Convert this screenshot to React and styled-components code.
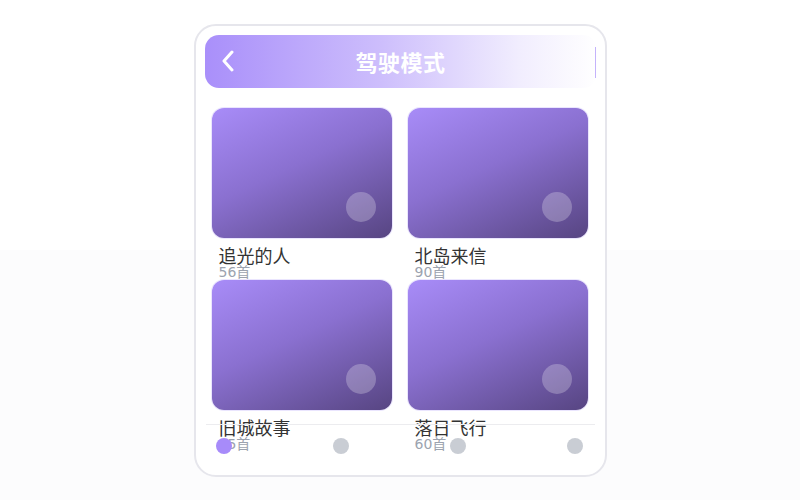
import React from 'react';
import styled, { createGlobalStyle } from 'styled-components';

const GlobalStyle = createGlobalStyle`
  html, body {
    margin: 0;
    padding: 0;
  }
  body {
    background: linear-gradient(180deg, #ffffff 50%, #fcfcfd 50%);
    font-family: "DejaVu Sans", "Noto Sans CJK SC", sans-serif;
  }
`;

const Page = styled.div`
  height: 100vh;
  display: flex;
  align-items: center;
  justify-content: center;
`;

const Phone = styled.div`
  position: relative;
  width: 413px;
  height: 453px;
  box-sizing: border-box;
  border: 2px solid #e6e6ec;
  border-radius: 22px;
  background: #fff;
  overflow: hidden;
  display: flex;
  flex-direction: column;
`;

const Header = styled.div`
  position: relative;
  height: 53px;
  margin: 9px 8px 0 9px;
  border-radius: 14px;
  background: linear-gradient(90deg, #a98ffa 0%, #cdbefc 45%, #f1edfe 80%, #ffffff 100%);
  display: flex;
  align-items: center;
  justify-content: center;
  flex-shrink: 0;
`;

const BackButton = styled.button`
  position: absolute;
  left: 16px;
  top: 50%;
  transform: translateY(-50%);
  border: none;
  background: none;
  padding: 0;
  display: flex;
  cursor: pointer;
`;

const Title = styled.h1`
  margin: 0;
  font-family: "Noto Sans CJK SC", sans-serif;
  font-size: 22px;
  font-weight: 700;
  color: #fff;
  letter-spacing: 0.5px;
`;

const EdgeLine = styled.span`
  position: absolute;
  right: 1px;
  top: 12px;
  bottom: 10px;
  width: 1px;
  background: #c4b3fb;
`;

const Grid = styled.div`
  display: grid;
  grid-template-columns: 1fr 1fr;
  grid-auto-rows: 172px;
  column-gap: 16px;
  padding: 20px 17px 0 16px;
`;

const Card = styled.div`
  display: flex;
  flex-direction: column;
  min-width: 0;
`;

const Cover = styled.div`
  position: relative;
  height: 130px;
  border-radius: 12px;
  background: linear-gradient(155deg, #a88cf8 0%, #8a70d0 45%, #574582 100%);
  box-shadow: 0 0 0 1px rgba(196, 181, 253, 0.35);
`;

const PlayDot = styled.span`
  position: absolute;
  right: 16px;
  bottom: 16px;
  width: 30px;
  height: 30px;
  border-radius: 50%;
  background: rgba(255, 255, 255, 0.25);
`;

const Name = styled.div`
  margin-top: 10px;
  padding-left: 7px;
  font-size: 18px;
  line-height: 17px;
  color: #333;
`;

const Count = styled.div`
  padding-left: 7px;
  font-size: 14px;
  line-height: 14px;
  color: #9ca3af;
`;

const TabBar = styled.nav`
  position: absolute;
  left: 10px;
  right: 10px;
  bottom: 7px;
  height: 44px;
  box-sizing: border-box;
  border-top: 1px solid #ececef;
  padding: 0 11px 0 10px;
  display: flex;
  align-items: center;
  justify-content: space-between;
`;

const TabDot = styled.span`
  width: 16px;
  height: 16px;
  border-radius: 50%;
  background: ${(props) => (props.active ? '#a78bfa' : '#c9cdd4')};
`;

const albums = [
  { name: '追光的人', count: 56 },
  { name: '北岛来信', count: 90 },
  { name: '旧城故事', count: 35 },
  { name: '落日飞行', count: 60 },
];

function App() {
  return (
    <Page>
      <GlobalStyle />
      <Phone>
        <Header>
          <BackButton aria-label="返回">
            <svg width="14" height="22" viewBox="0 0 14 22" fill="none">
              <path d="M11 2 L3 11 L11 20" stroke="#fff" strokeWidth="3" strokeLinecap="round" strokeLinejoin="round" />
            </svg>
          </BackButton>
          <Title>驾驶模式</Title>
          <EdgeLine />
        </Header>
        <Grid>
          {albums.map((a) => (
            <Card key={a.name}>
              <Cover>
                <PlayDot />
              </Cover>
              <Name>{a.name}</Name>
              <Count>{a.count}首</Count>
            </Card>
          ))}
        </Grid>
        <TabBar>
          {[0, 1, 2, 3].map((i) => (
            <TabDot key={i} active={i === 0} />
          ))}
        </TabBar>
      </Phone>
    </Page>
  );
}

export default App;
